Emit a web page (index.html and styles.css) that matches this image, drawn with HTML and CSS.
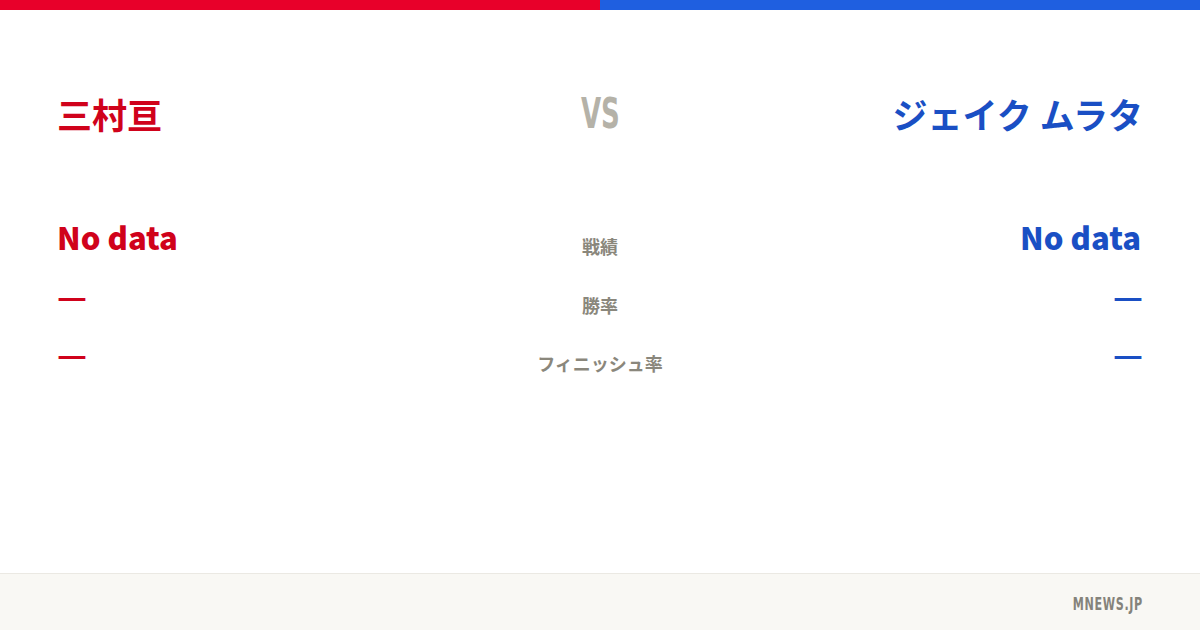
FILE: index.html
```html
<!DOCTYPE html>
<html lang="ja">
<head>
    <meta charset="UTF-8">
    <meta name="viewport" content="width=device-width, initial-scale=1.0">
    <title>三村亘 vs ジェイク ムラタ</title>
    <link rel="stylesheet" href="styles.css">
</head>
<body>
    <div class="topbar">
        <div class="topbar-red"></div>
        <div class="topbar-blue"></div>
    </div>
    <main class="card">
        <div class="fighters">
            <div class="name red">三村亘</div>
            <div class="vs"><span class="narrow">VS</span></div>
            <div class="name blue right">ジェイク ムラタ</div>
        </div>
        <div class="stats">
            <div class="val big red">No data</div>
            <div class="label">戦績</div>
            <div class="val big blue right">No data</div>

            <div class="val dash red">—</div>
            <div class="label">勝率</div>
            <div class="val dash blue right">—</div>

            <div class="val dash red">—</div>
            <div class="label">フィニッシュ率</div>
            <div class="val dash blue right">—</div>
        </div>
    </main>
    <footer class="footer">
        <span class="site narrow">MNEWS.JP</span>
    </footer>
</body>
</html>
```

FILE: styles.css
```css
html, body {
    margin: 0;
    padding: 0;
}
body {
    width: 1200px;
    height: 630px;
    display: flex;
    flex-direction: column;
    background: #fff;
    font-family: "Noto Sans CJK JP", "Noto Sans", sans-serif;
    overflow: hidden;
}
.topbar {
    display: flex;
    height: 10px;
}
.topbar-red {
    flex: 1;
    background: #e8002a;
}
.topbar-blue {
    flex: 1;
    background: #1f5fe0;
}
.card {
    flex: 1;
    padding: 0 57px;
}
.red {
    color: #d0021b;
}
.blue {
    color: #1a4fc4;
}
.right {
    text-align: right;
}
/* fake condensed face: no narrow font installed */
.narrow {
    display: inline-block;
    font-family: "DejaVu Sans", sans-serif;
    font-weight: 700;
    transform: scaleX(0.62);
}
.fighters {
    display: grid;
    grid-template-columns: 1fr 200px 1fr;
    align-items: center;
    margin-top: 77px;
    height: 46px;
}
.name {
    font-size: 35px;
    font-weight: 700;
    line-height: 46px;
}
.vs {
    text-align: center;
    font-size: 42px;
    color: #b5b2a8;
    margin-top: -8px;
}
.stats {
    display: grid;
    grid-template-columns: 1fr 200px 1fr;
    grid-auto-rows: 58px;
    align-items: baseline;
    margin-top: 84px;
}
.val {
    font-weight: 700;
}
.big {
    font-size: 31px;
    font-weight: 900;
    line-height: 40px;
}
.big.right {
    margin-right: 2px;
}
.dash {
    font-size: 33px;
    line-height: 40px;
}
.label {
    text-align: center;
    font-size: 18px;
    font-weight: 700;
    color: #8a877c;
    position: relative;
    top: 4px;
}
.footer {
    height: 56px;
    border-top: 1px solid #ebe9e3;
    background: #f9f8f4;
    display: flex;
    align-items: center;
    justify-content: flex-end;
    padding: 0 57px;
}
.site {
    font-size: 18px;
    letter-spacing: 1px;
    color: #85837b;
    transform-origin: right center;
    margin-top: 2px;
}
```
